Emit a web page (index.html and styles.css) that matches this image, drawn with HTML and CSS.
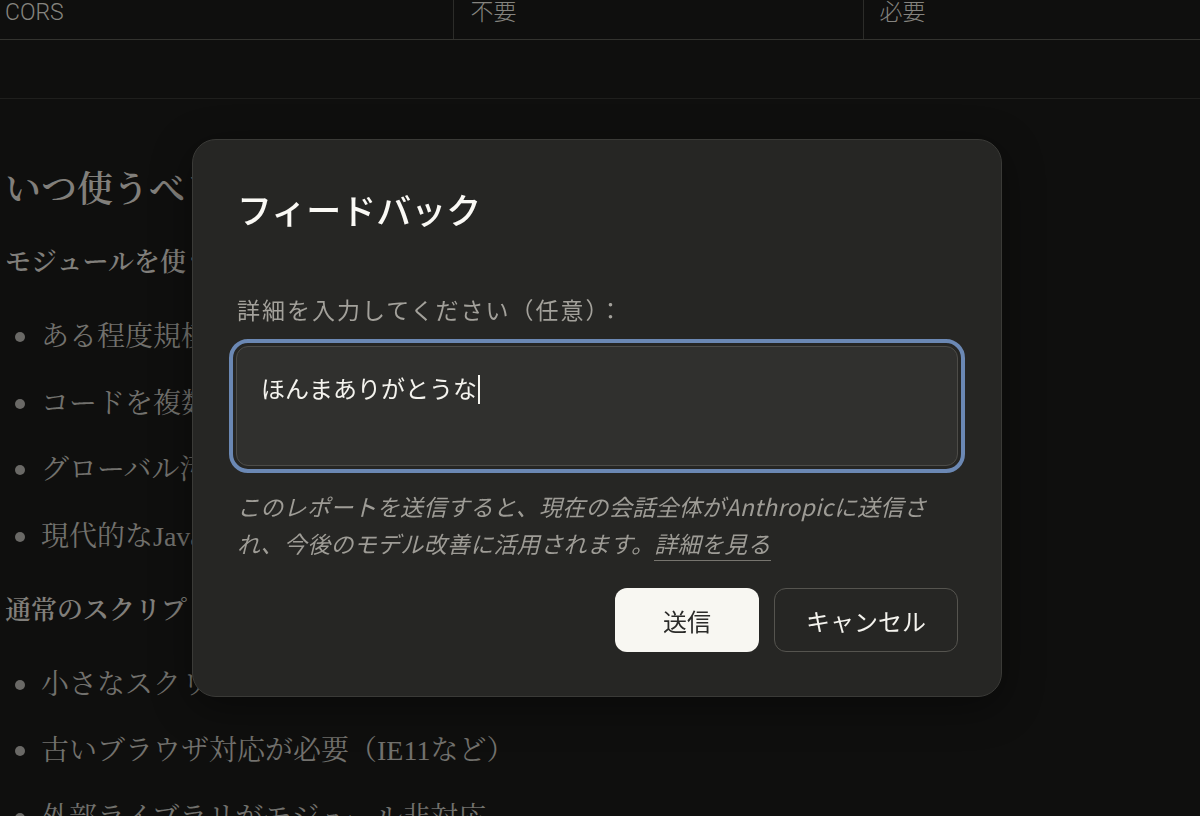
FILE: index.html
```html
<!DOCTYPE html>
<html lang="ja">
<head>
    <meta charset="UTF-8">
    <meta name="viewport" content="width=device-width, initial-scale=1.0">
    <title>フィードバック</title>
    <link rel="stylesheet" href="styles.css">
</head>
<body>
    <div class="doc">
        <table class="compare-table">
            <tr>
                <td>CORS</td>
                <td>不要</td>
                <td>必要</td>
            </tr>
        </table>
        <div class="table-end"></div>

        <h2 class="doc-title">いつ使うべきか</h2>

        <h3 class="doc-sub">モジュールを使うべき場合</h3>
        <ul class="doc-list">
            <li>ある程度規模の大きいアプリ</li>
            <li>コードを複数ファイルに分割</li>
            <li>グローバル汚染を避けたい</li>
            <li>現代的なJavaScript開発</li>
        </ul>

        <h3 class="doc-sub">通常のスクリプトで十分な場合</h3>
        <ul class="doc-list">
            <li>小さなスクリプト</li>
            <li>古いブラウザ対応が必要（IE11など）</li>
            <li>外部ライブラリがモジュール非対応</li>
        </ul>
    </div>

    <div class="overlay">
        <div class="dialog">
            <h2 class="dialog-title">フィードバック</h2>

            <label class="field-label">詳細を入力してください（任意）：</label>
            <div class="field">ほんまありがとうな<span class="caret"></span></div>

            <p class="disclaimer">
                このレポートを送信すると、現在の会話全体がAnthropicに送信され、今後のモデル改善に活用されます。<a href="#" class="more-link">詳細を見る</a>
            </p>

            <div class="dialog-actions">
                <button class="btn btn-primary">送信</button>
                <button class="btn btn-ghost">キャンセル</button>
            </div>
        </div>
    </div>
</body>
</html>
```

FILE: styles.css
```css
* {
    margin: 0;
    padding: 0;
    box-sizing: border-box;
}

body {
    background: #0f0f0e;
    color: #72716d;
    font-family: 'Liberation Serif', 'Noto Serif CJK JP', 'Noto Sans CJK JP', serif;
    overflow: hidden;
    height: 816px;
}

/* page behind the dialog */
.doc {
    padding-left: 5px;
}

.compare-table {
    border-collapse: collapse;
    margin-left: -5px;
    font-family: 'Roboto', 'Noto Sans CJK JP', sans-serif;
    font-size: 23px;
    font-weight: 300;
    color: #85847f;
}

.compare-table td {
    line-height: 26px;
    padding: 0 16px 13px 16px;
    border-bottom: 1px solid #33332f;
    vertical-align: top;
}

.compare-table td:first-child {
    width: 458px;
    padding-left: 5px;
}

.compare-table td:nth-child(2) {
    width: 413px;
}

.compare-table td:last-child {
    width: 340px;
}

.compare-table td + td {
    border-left: 1px solid #2c2c29;
}

.table-end {
    height: 59px;
    margin-left: -5px;
    border-bottom: 1px solid #1f1f1d;
}

.doc-title {
    font-size: 36px;
    line-height: 50px;
    font-weight: 600;
    margin-top: 66px;
    color: #817f7b;
}

.doc-sub {
    font-size: 26px;
    line-height: 40px;
    font-weight: 600;
    margin-top: 28px;
    color: #817f7b;
}

.doc-list {
    list-style: none;
    margin: 32px 0 32px;
}

.doc-list li {
    position: relative;
    font-size: 28px;
    line-height: 44px;
    padding-left: 36px;
    margin-bottom: 22.5px;
}

.doc-list li::before {
    content: '';
    position: absolute;
    left: 10px;
    top: 17px;
    width: 10px;
    height: 10px;
    border-radius: 50%;
    background: #6a6966;
}

/* feedback dialog */
.overlay {
    position: fixed;
    inset: 0;
    display: flex;
    justify-content: center;
    align-items: center;
    padding: 20px 6px 0 0;
}

.dialog {
    width: 810px;
    background: #262624;
    border: 1px solid #3a3a37;
    border-radius: 24px;
    padding: 45px 43px 44px;
    font-family: 'Noto Sans CJK JP', sans-serif;
    box-shadow: 0 10px 40px rgba(0, 0, 0, 0.4);
}

.dialog-title {
    font-size: 35px;
    line-height: 48px;
    font-weight: 500;
    color: #faf9f5;
    padding-left: 1px;
}

.field-label {
    display: block;
    margin-top: 58px;
    font-size: 23px;
    line-height: 36px;
    letter-spacing: 2px;
    color: #a3a19b;
    padding-left: 1px;
}

.field {
    margin-top: 19px;
    height: 120px;
    background: #30302e;
    border: 1px solid #4d4c48;
    border-radius: 12px;
    outline: 4px solid #6b88b4;
    outline-offset: 3px;
    padding: 23px 24px;
    font-size: 24px;
    line-height: 36px;
    color: #f4f3ee;
}

.caret {
    display: inline-block;
    width: 2px;
    height: 29px;
    margin-left: 1px;
    vertical-align: -6px;
    background: #f4f3ee;
}

.disclaimer {
    margin-top: 22px;
    font-size: 23px;
    line-height: 37px;
    letter-spacing: 0.3px;
    font-style: italic;
    color: #9e9c96;
    padding-left: 1px;
}

.more-link {
    color: #9e9c96;
    text-decoration: none;
    border-bottom: 1px solid #77756f;
}

.dialog-actions {
    display: flex;
    justify-content: flex-end;
    gap: 15px;
    margin-top: 26px;
}

.btn {
    height: 64px;
    padding: 0 31px;
    border-radius: 12px;
    font-family: 'Noto Sans CJK JP', sans-serif;
    font-size: 24px;
    cursor: pointer;
}

.btn-primary {
    min-width: 144px;
    background: #f8f7f2;
    color: #2b2b29;
    border: none;
}

.btn-ghost {
    background: transparent;
    color: #f4f3ee;
    border: 1px solid #55544f;
}
```
